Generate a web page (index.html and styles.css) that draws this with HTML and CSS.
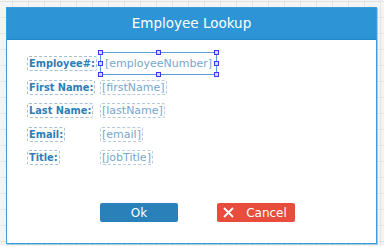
FILE: index.html
```html
<!DOCTYPE html>
<html lang="en">
<head>
    <meta charset="UTF-8">
    <meta name="viewport" content="width=device-width, initial-scale=1.0">
    <title>Employee Lookup</title>
    <link rel="stylesheet" href="styles.css">
</head>
<body>
    <div class="dialog">
        <div class="dialog-title">Employee Lookup</div>
        <div class="dialog-body">
            <div class="fields">
                <span class="field-label">Employee#:</span>
                <span class="field-value selected">[employeeNumber]
                    <span class="selection">
                        <i class="handle h-tl"></i><i class="handle h-tc"></i><i class="handle h-tr"></i>
                        <i class="handle h-ml"></i><i class="handle h-mr"></i>
                        <i class="handle h-bl"></i><i class="handle h-bc"></i><i class="handle h-br"></i>
                    </span>
                </span>

                <span class="field-label">First Name:</span>
                <span class="field-value">[firstName]</span>

                <span class="field-label">Last Name:</span>
                <span class="field-value">[lastName]</span>

                <span class="field-label">Email:</span>
                <span class="field-value">[email]</span>

                <span class="field-label">Title:</span>
                <span class="field-value">[jobTitle]</span>
            </div>
        </div>
        <div class="dialog-buttons">
            <button class="btn btn-ok">Ok</button>
            <button class="btn btn-cancel">
                <svg class="btn-icon" width="11" height="11" viewBox="0 0 11 11">
                    <path d="M1 1 L10 10 M10 1 L1 10" stroke="#fff" stroke-width="1.8" fill="none"/>
                </svg>
                Cancel
            </button>
        </div>
    </div>
</body>
</html>
```

FILE: styles.css
```css
body {
    margin: 0;
    padding: 7px 0 0 6px;
    height: 246px;
    box-sizing: border-box;
    overflow: hidden;
    font-family: "DejaVu Sans", sans-serif;
    background-color: #f4f4f4;
    background-image:
        linear-gradient(to right, #e4e4e4 1px, transparent 1px),
        linear-gradient(to bottom, #e4e4e4 1px, transparent 1px);
    background-size: 16px 16px;
    background-position: 12px 1px;
}

.dialog {
    width: 369px;
    height: 235px;
    background: #fff;
    border: 1px solid #3d9bd8;
    box-shadow: 1px 1px 0 #a6cbe6;
    display: flex;
    flex-direction: column;
}

.dialog-title {
    height: 31px;
    line-height: 30px;
    background: #2d95d6;
    border-bottom: 1px solid #2586c4;
    color: #fff;
    text-align: center;
    font-size: 13.5px;
}

.dialog-body {
    padding: 16px 0 0 20px;
}

.fields {
    display: grid;
    grid-template-columns: 73px auto;
    grid-auto-rows: 15px;
    row-gap: 8.5px;
    justify-items: start;
    align-items: center;
}

.field-label {
    font-size: 9.8px;
    font-weight: bold;
    color: #2f7db8;
    border: 1px dashed #a9bfd4;
    border-radius: 2px;
    padding: 0 1px;
    line-height: 13px;
}

.field-value {
    position: relative;
    font-size: 11px;
    color: #76a6d0;
    border: 1px dashed #b9cadb;
    border-radius: 2px;
    padding: 0 1px;
    line-height: 13px;
}

.field-value.selected {
    border-color: transparent;
    margin-left: 3px;
}

.selection {
    position: absolute;
    top: -5px;
    bottom: -5px;
    left: -4px;
    right: -4px;
    border: 1px solid #5a9fdc;
}

.handle {
    position: absolute;
    width: 3px;
    height: 3px;
    border: 1px solid #3a3af0;
    background: #d8d8ff;
}

.h-tl { left: -3px; top: -3px; }
.h-tc { left: calc(50% - 3px); top: -3px; }
.h-tr { right: -3px; top: -3px; }
.h-ml { left: -3px; top: calc(50% - 3px); }
.h-mr { right: -3px; top: calc(50% - 3px); }
.h-bl { left: -3px; bottom: -3px; }
.h-bc { left: calc(50% - 3px); bottom: -3px; }
.h-br { right: -3px; bottom: -3px; }

.dialog-buttons {
    margin-top: auto;
    margin-bottom: 21px;
    padding-left: 93px;
    display: flex;
    gap: 39px;
}

.btn {
    width: 78px;
    height: 19px;
    border: none;
    border-radius: 2px;
    color: #fff;
    font-family: "DejaVu Sans", sans-serif;
    font-size: 12px;
    padding: 0;
    display: flex;
    align-items: center;
    justify-content: center;
}

.btn-ok {
    background: #2a80b9;
}

.btn-cancel {
    background: #e74c3c;
    gap: 12px;
    padding-right: 2px;
}

.btn-icon {
    display: block;
}
```
